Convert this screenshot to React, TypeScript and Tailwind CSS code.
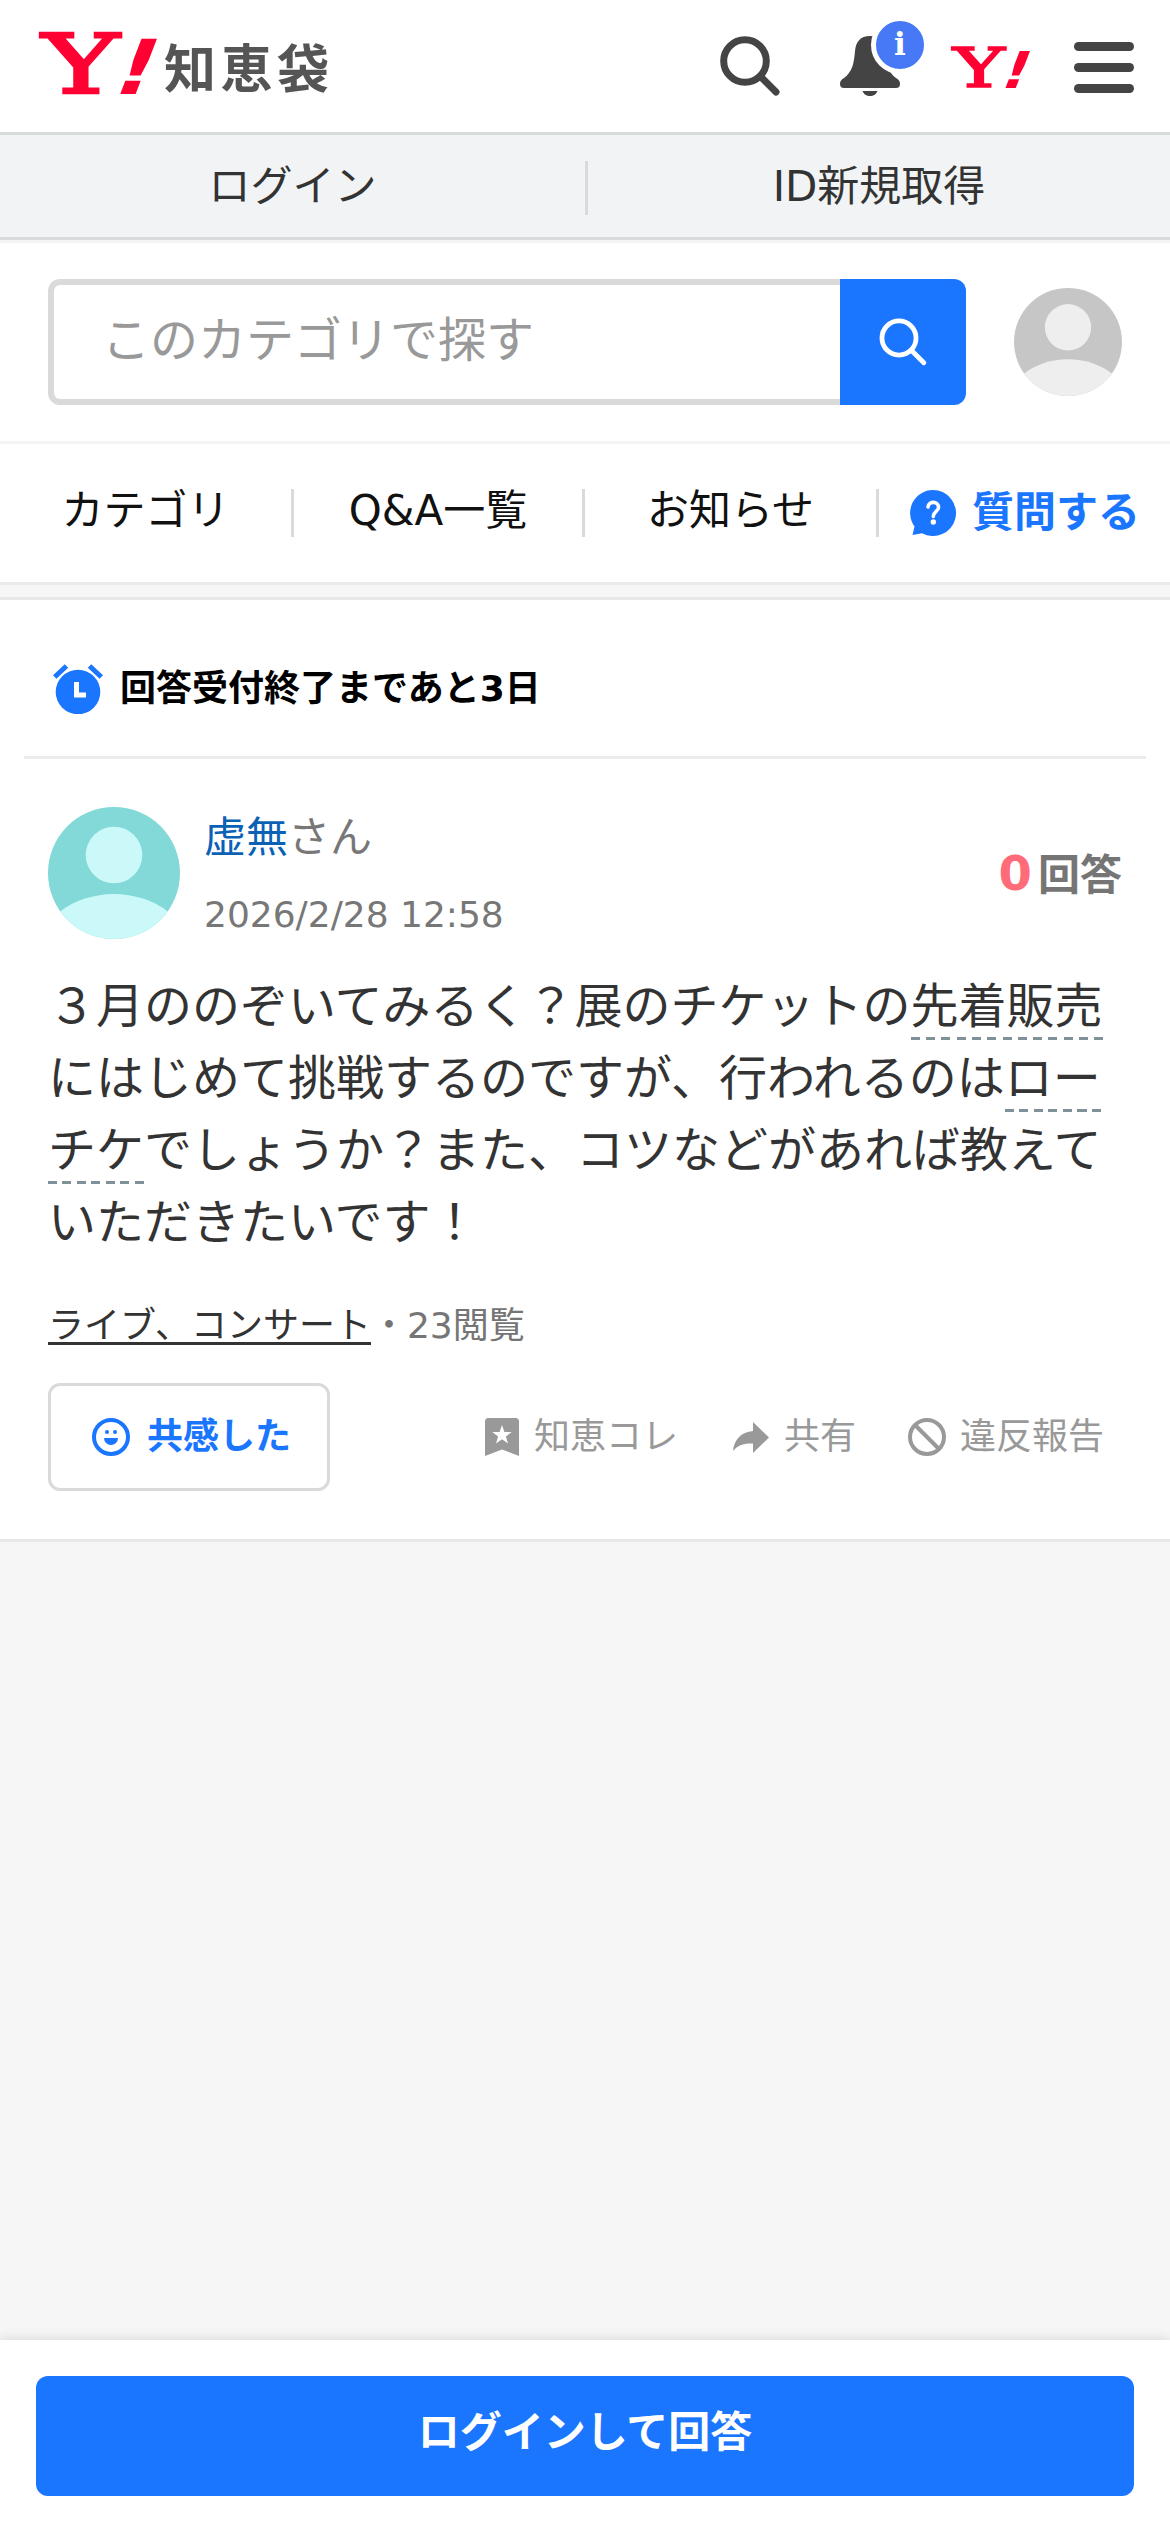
import type { ReactNode } from 'react'

function YahooMark({ className = '' }: { className?: string }) {
  return (
    <svg viewBox="0 0 118 64" className={`overflow-visible ${className}`} aria-label="Yahoo">
      <g fill="#ff0033">
        <text transform="translate(3 61) scale(1.43 1)" fontFamily="DejaVu Serif, serif" fontSize="82" fontWeight="400" stroke="#ff0033" strokeWidth="2.6">Y</text>
        <text transform="translate(69 62) skewX(-21) scale(1.15 1)" fontFamily="DejaVu Sans, sans-serif" fontSize="76" fontWeight="700">!</text>
      </g>
    </svg>
  )
}

function SearchIcon({ className = '', width }: { className?: string; width: number }) {
  return (
    <svg viewBox="0 0 60 60" className={className} fill="none" stroke="currentColor" strokeWidth={width} strokeLinecap="round">
      <circle cx="25" cy="25" r="21.3" />
      <path d="M41 41l15 15" />
    </svg>
  )
}

interface AvatarProps {
  className?: string
  bg: string
  fg: string
  id: string
}

function Avatar({ className = '', bg, fg, id }: AvatarProps) {
  return (
    <svg viewBox="0 0 132 132" className={className}>
      <clipPath id={id}>
        <circle cx="66" cy="66" r="66" />
      </clipPath>
      <g clipPath={`url(#${id})`}>
        <rect width="132" height="132" fill={bg} />
        <circle cx="66" cy="48" r="28.3" fill={fg} />
        <ellipse cx="66" cy="147" rx="76" ry="60" fill={fg} />
      </g>
    </svg>
  )
}

function Header() {
  return (
    <header className="flex h-[135px] items-start justify-between border-b-3 border-[#d8dbdc] pr-9 pl-[39px] text-[#444]">
      <div className="flex items-start">
        <YahooMark className="mt-8 h-16 w-[118px]" />
        <span className="ml-[7px] pt-[34px] text-[52px] leading-[72px] font-bold tracking-[4.5px] text-[#555]">知恵袋</span>
      </div>
      <div className="flex items-start">
        <SearchIcon className="mt-9 size-[60px]" width={7} />
        <div className="relative mt-9 ml-[60px] size-[60px]">
          <svg viewBox="0 0 60 60" className="size-[60px]" fill="currentColor">
            <path d="M30 0C20 0 16 6 15 15C14 28 12 36 4 42C1 44 0 45 0 48Q0 52 4 52H56Q60 52 60 48C60 45 59 44 56 42C48 36 46 28 45 15C44 6 40 0 30 0Z" />
            <path d="M22.500 55h15c-1 3-4 5-7.500 5s-6.500-2-7.500-5z" />
          </svg>
          <span className="absolute -top-5 left-[31px] flex size-[58px] items-center justify-center rounded-full border-5 border-white bg-[#4779f7] pb-[2px] font-['DejaVu_Serif',serif] text-[31px] leading-none font-bold text-white">
            i
          </span>
        </div>
        <YahooMark className="mt-[46px] ml-[51px] h-[43px] w-[79px]" />
        <div className="mt-[42px] ml-11 flex w-[60px] flex-col gap-3">
          <span className="h-[9px] rounded-full bg-[#444]" />
          <span className="h-[9px] rounded-full bg-[#444]" />
          <span className="h-[9px] rounded-full bg-[#444]" />
        </div>
      </div>
    </header>
  )
}

function LoginBar() {
  return (
    <div className="flex h-[105px] items-center border-b-3 border-[#d8dbdc] bg-[#f1f3f5] text-center text-[42px] leading-[60px] text-[#333]">
      <a className="w-[585px] pt-[2px]">ログイン</a>
      <span className="mt-[3px] h-[54px] w-[3px] bg-[#d8dbdc]" />
      <a className="flex-1 pt-[2px]">ID新規取得</a>
    </div>
  )
}

function SearchRow() {
  return (
    <div className="flex h-[204px] items-start border-t-3 border-b-3 border-t-[#f3f4f5] border-b-[#f5f5f5] px-12 pt-9">
      <div className="flex h-[126px] w-[792px] items-center rounded-l-xl border-6 border-r-0 border-[#dadada] pb-[5px] pl-12 text-5xl text-[#999]">
        このカテゴリで探す
      </div>
      <button className="flex h-[126px] w-[126px] items-center justify-center rounded-r-xl bg-[#1a75ff] text-white">
        <SearchIcon className="size-12" width={6} />
      </button>
      <Avatar id="me" bg="#c6c6c6" fg="#eeeeee" className="mt-[9px] ml-12 size-[108px]" />
    </div>
  )
}

function Nav() {
  return (
    <nav className="flex h-[141px] items-center border-b-3 border-[#ebebeb] pb-[4px] text-center text-[42px] leading-[60px] text-[#111]">
      <a className="w-[291px]">カテゴリ</a>
      <Separator />
      <a className="w-[288px]">Q&amp;A一覧</a>
      <Separator />
      <a className="w-[291px]">お知らせ</a>
      <Separator />
      <a className="flex flex-1 items-center pt-[3px] pl-[31px] font-bold text-[#1a75ff]">
        <svg viewBox="0 0 46 46" className="mr-4 size-[46px]">
          <path d="M23 0a23 23 0 1 1-11 43.200L2.500 45l2-8.500A23 23 0 0 1 23 0z" fill="#1a75ff" />
          <path d="M18 17c.500-6.500 10.800-6 10.500.500-.200 4-5.500 4.500-5.200 9" fill="none" stroke="#fff" strokeWidth="3.600" strokeLinecap="round" />
          <circle cx="23.300" cy="32" r="2.700" fill="#fff" />
        </svg>
        質問する
      </a>
    </nav>
  )
}

function Separator() {
  return <span className="mt-[4px] h-12 w-[3px] bg-[#dadada]" />
}

// Dashed underline, repeated for each line the term wraps onto
function Term({ children, dash }: { children: ReactNode; dash: string }) {
  return <span className={`box-decoration-clone bg-[length:100%_3px] bg-bottom bg-no-repeat pb-[6px] ${dash}`}>{children}</span>
}

function Question() {
  return (
    <main className="h-[945px] border-y-3 border-[#e8e8e8] bg-white">
      <div className="mx-6 flex h-[159px] items-center border-b-3 border-[#ebebeb] pt-[22px] pl-[29px] text-4xl font-bold text-black">
        <svg viewBox="0 0 50 50" className="mr-[17px] size-[50px]">
          <circle cx="25" cy="28" r="22.300" fill="#1a75ff" />
          <path d="M1.700 13L13.500 2M36.500 2l11.800 11" stroke="#1a75ff" strokeWidth="5" />
          <path d="M23.500 18v13h9.500" fill="none" stroke="#fff" strokeWidth="5" />
        </svg>
        回答受付終了まであと3日
      </div>

      <div className="px-12 pt-12">
        <div className="flex h-[132px]">
          <Avatar id="asker" bg="#82d9d7" fg="#cbf8f8" className="size-[132px]" />
          <div className="ml-6 flex-1 pt-px text-[#777]">
            <p className="h-[78px] text-[42px] leading-[60px]">
              <a className="text-[#0b62b5]">虚無</a>さん
            </p>
            <p className="text-4xl leading-[58px]">2026/2/28 12:58</p>
          </div>
          <p className="pt-[36px] text-[42px] leading-[66px] font-bold text-[#757575]">
            <span className="mr-[6px] text-5xl leading-none text-[#ff6b78]">0</span>回答
          </p>
        </div>

        <p className="mt-[31px] text-5xl leading-[72px] text-[#333]">
          ３月ののぞいてみるく？展のチケットの
          <Term dash="bg-[image:repeating-linear-gradient(to_right,#7f9199_0_9px,transparent_9px_15.25px)]">先着販売</Term>
          にはじめて挑戦するのですが、行われるのは
          <Term dash="bg-[image:repeating-linear-gradient(to_right,#7f9199_0_9px,transparent_9px_14.5px)]">ローチケ</Term>
          でしょうか？また、コツなどがあれば教えていただきたいです！
        </p>

        <p className="mt-[39px] text-4xl leading-[58px] text-[#757575]">
          <a className="bg-[image:linear-gradient(#333,#333)] bg-[length:100%_3px] bg-[position:0_calc(100%-1px)] bg-no-repeat text-[#333]">ライブ、コンサート</a>・23閲覧
        </p>

        <Actions />
      </div>
    </main>
  )
}

function Actions() {
  return (
    <div className="mt-[28px] flex h-[108px] items-center justify-between pr-[18px] text-4xl leading-[54px] text-[#999]">
      <button className="flex h-[108px] w-[282px] items-center rounded-xl border-3 border-[#dadada] pl-[41px] font-bold text-[#1a75ff]">
        <svg viewBox="0 0 38 38" className="mr-[17px] size-[38px]" fill="currentColor">
          <circle cx="19" cy="19" r="17" fill="none" stroke="currentColor" strokeWidth="4" />
          <circle cx="15" cy="14" r="2" />
          <circle cx="23" cy="14" r="2" />
          <path d="M12 20h14a7 7 0 0 1-14 0z" />
        </svg>
        共感した
      </button>
      <div className="flex items-center">
        <svg viewBox="0 0 34 38" className="mr-[15px] h-[38px] w-[34px]">
          <path d="M3.500 0h27A3.500 3.500 0 0 1 34 3.500V38l-17-6.500L0 38V3.500A3.500 3.500 0 0 1 3.500 0z" fill="#999" />
          <path d="M17 7l2.400 6.900 7.300.100-5.800 4.500 2.100 7-6-4.200-6 4.200 2.100-7-5.800-4.500 7.300-.100z" fill="#fff" />
        </svg>
        知恵コレ
        <svg viewBox="0 0 36 31" className="mr-[15px] ml-[55px] h-[31px] w-9" fill="#999">
          <path d="M20 0l16 15.500L20 31v-9.500C11 21 5 23 0 29 1 18 8 10 20 9z" />
        </svg>
        共有
        <svg viewBox="0 0 38 38" className="mr-[14px] ml-[52px] size-[38px]" fill="none" stroke="#999" strokeWidth="4">
          <circle cx="19" cy="19" r="17" />
          <path d="M7 7l24 24" />
        </svg>
        違反報告
      </div>
    </div>
  )
}

export default function App() {
  return (
    <div className="flex h-[2532px] w-[1170px] flex-col bg-[#f6f6f6] font-['DejaVu_Sans','Noto_Sans_CJK_JP',sans-serif]">
      <div className="bg-white">
        <Header />
        <LoginBar />
        <SearchRow />
        <Nav />
      </div>
      <div className="h-3" />
      <Question />
      <footer className="mt-auto h-48 bg-white px-9 pt-9 shadow-[0_0_12px_rgba(0,0,0,0.15)]">
        <button className="h-[120px] w-full rounded-xl bg-[#1a75ff] pb-[6px] text-[42px] leading-[60px] font-bold text-white">
          ログインして回答
        </button>
      </footer>
    </div>
  )
}
